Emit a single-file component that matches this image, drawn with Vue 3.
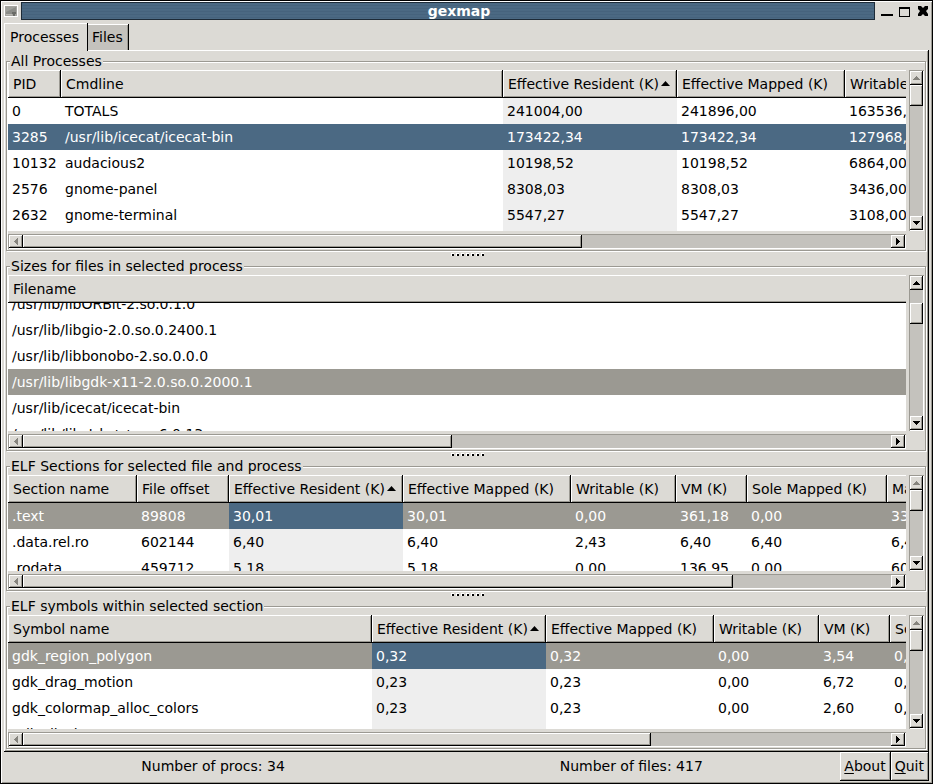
<script setup>
import { onMounted, ref } from 'vue'

const tabs = [
  { label: 'Processes', active: true },
  { label: 'Files', active: false },
]

const panes = [
  {
    id: 'processes',
    title: 'All Processes',
    grow: 133,
    focused: true,
    sorted: 2,
    selected: 1,
    columns: [
      { label: 'PID', width: 53 },
      { label: 'Cmdline', width: 442 },
      { label: 'Effective Resident (K)', width: 174 },
      { label: 'Effective Mapped (K)', width: 168 },
      { label: 'Writable (K)', width: 105 },
    ],
    rows: [
      ['0', 'TOTALS', '241004,00', '241896,00', '163536,00'],
      ['3285', '/usr/lib/icecat/icecat-bin', '173422,34', '173422,34', '127968,00'],
      ['10132', 'audacious2', '10198,52', '10198,52', '6864,00'],
      ['2576', 'gnome-panel', '8308,03', '8308,03', '3436,00'],
      ['2632', 'gnome-terminal', '5547,27', '5547,27', '3108,00'],
    ],
    scrollTop: 0,
    vertical: { before: 0, atStart: true },
    horizontal: 64.4,
  },
  {
    id: 'files',
    title: 'Sizes for files in selected process',
    grow: 128,
    focused: false,
    sorted: -1,
    selected: 3,
    columns: [{ label: 'Filename', width: 1800 }],
    rows: [
      ['/usr/lib/libORBit-2.so.0.1.0'],
      ['/usr/lib/libgio-2.0.so.0.2400.1'],
      ['/usr/lib/libbonobo-2.so.0.0.0'],
      ['/usr/lib/libgdk-x11-2.0.so.0.2000.1'],
      ['/usr/lib/icecat/icecat-bin'],
      ['/usr/lib/libstdc++.so.6.0.13'],
    ],
    scrollTop: 12,
    vertical: { before: 13, atStart: false },
    horizontal: 49.4,
  },
  {
    id: 'sections',
    title: 'ELF Sections for selected file and process',
    grow: 68,
    focused: false,
    sorted: 2,
    selected: 0,
    columns: [
      { label: 'Section name', width: 129 },
      { label: 'File offset', width: 92 },
      { label: 'Effective Resident (K)', width: 174 },
      { label: 'Effective Mapped (K)', width: 168 },
      { label: 'Writable (K)', width: 105 },
      { label: 'VM (K)', width: 71 },
      { label: 'Sole Mapped (K)', width: 140 },
      { label: 'Mapped (K)', width: 105 },
    ],
    rows: [
      ['.text', '89808', '30,01', '30,01', '0,00', '361,18', '0,00', '332,00'],
      ['.data.rel.ro', '602144', '6,40', '6,40', '2,43', '6,40', '6,40', '6,40'],
      ['.rodata', '459712', '5,18', '5,18', '0,00', '136,95', '0,00', '60,00'],
    ],
    scrollTop: 0,
    vertical: { before: 0, atStart: true },
    horizontal: 81.8,
  },
  {
    id: 'symbols',
    title: 'ELF symbols within selected section',
    grow: 86,
    focused: false,
    sorted: 1,
    selected: 0,
    columns: [
      { label: 'Symbol name', width: 364 },
      { label: 'Effective Resident (K)', width: 174 },
      { label: 'Effective Mapped (K)', width: 168 },
      { label: 'Writable (K)', width: 105 },
      { label: 'VM (K)', width: 71 },
      { label: 'Sole Mapped (K)', width: 140 },
    ],
    rows: [
      ['gdk_region_polygon', '0,32', '0,32', '0,00', '3,54', '0,00'],
      ['gdk_drag_motion', '0,23', '0,23', '0,00', '6,72', '0,00'],
      ['gdk_colormap_alloc_colors', '0,23', '0,23', '0,00', '2,60', '0,00'],
      ['gdk_display', '', '', '', '', ''],
    ],
    scrollTop: 0,
    vertical: { before: 0, atStart: true },
    horizontal: 72.4,
  },
]

const views = ref([])
onMounted(() => {
  panes.forEach((pane, i) => {
    views.value[i].scrollTop = pane.scrollTop
  })
})
</script>

<template>
  <div class="window">
    <header class="titlebar">
      <svg class="app-icon" viewBox="0 0 14 12" aria-hidden="true">
        <path fill="#fff" d="M0 0h14v12H0z" />
        <path fill="#a5a49f" d="M1 1h12v10H1z" />
        <path fill="#8a8b87" d="M2 2h10v7H2z" />
        <path fill="#9fa09b" d="M2 2h10L2 7z" />
        <path fill="#b9b8b3" d="M2 9h6v1H2z" />
        <path fill="#6a6b67" d="M8 7h4v2h-1v2H9V9H8z" />
      </svg>
      <h1 class="title">gexmap</h1>
      <div class="window-buttons">
        <button type="button" aria-label="Minimize">
          <svg viewBox="0 0 12 12"><path d="M0 9h12v2H0z" /></svg>
        </button>
        <button type="button" aria-label="Maximize">
          <svg viewBox="0 0 12 12"><path fill-rule="evenodd" d="M0 2h11v10H0zM1 4v7h9V4z" /></svg>
        </button>
        <button type="button" aria-label="Close">
          <svg viewBox="0 0 12 12"><path d="M1 1h3l2 2 2-2h3v3L9 6l2 3v2H8L6 9l-2 2H1V9l2-3-2-2z" /></svg>
        </button>
      </div>
    </header>

    <nav class="tabs" role="tablist">
      <button
        v-for="tab in tabs"
        :key="tab.label"
        type="button"
        role="tab"
        class="tab"
        :class="{ active: tab.active }"
        :aria-selected="tab.active"
      >{{ tab.label }}</button>
    </nav>

    <main class="page">
      <template v-for="(pane, i) in panes" :key="pane.id">
        <div v-if="i" class="handle" role="separator">
          <span v-for="n in 7" :key="n" class="dot"></span>
        </div>
        <section class="pane" :style="{ flexGrow: pane.grow }" :aria-labelledby="pane.id">
          <div class="legend">
            <h2 :id="pane.id">{{ pane.title }}</h2>
          </div>
          <div class="frame">
            <div ref="views" class="view">
              <table :class="{ focused: pane.focused }">
                <colgroup>
                  <col v-for="c in pane.columns" :key="c.label" :style="{ width: c.width + 'px' }" />
                </colgroup>
                <thead>
                  <tr>
                    <th v-for="(c, ci) in pane.columns" :key="c.label" scope="col">
                      <span>{{ c.label }}</span>
                      <svg v-if="ci === pane.sorted" class="sort" viewBox="0 0 9 5" aria-hidden="true">
                        <path d="M0 5h9L4.500 0z" />
                      </svg>
                    </th>
                  </tr>
                </thead>
                <tbody>
                  <tr v-for="(row, ri) in pane.rows" :key="ri" :class="{ selected: ri === pane.selected }">
                    <td v-for="(cell, ci) in row" :key="ci" :class="{ sorted: ci === pane.sorted }">{{ cell }}</td>
                  </tr>
                  <tr class="filler" aria-hidden="true">
                    <td v-for="(c, ci) in pane.columns" :key="ci" :class="{ sorted: ci === pane.sorted }"></td>
                  </tr>
                </tbody>
              </table>
            </div>
            <div class="scroll vertical">
              <button type="button" class="arrow" aria-label="Scroll up" :disabled="pane.vertical.atStart">
                <svg viewBox="0 0 7 4"><path d="M3 0h1v1h1v1h1v1h1v1H0V3h1V2h1V1h1z" /></svg>
              </button>
              <div class="track">
                <div class="thumb" :style="{ marginTop: pane.vertical.before + 'px' }"></div>
              </div>
              <button type="button" class="arrow" aria-label="Scroll down">
                <svg viewBox="0 0 7 4"><path d="M0 0h7v1H6v1H5v1H4v1H3V3H2V2H1V1H0z" /></svg>
              </button>
            </div>
            <div class="scroll horizontal">
              <button type="button" class="arrow side" aria-label="Scroll left" disabled>
                <svg viewBox="0 0 4 7"><path d="M4 0v7H3V6H2V5H1V4H0V3h1V2h1V1h1V0z" /></svg>
              </button>
              <div class="track">
                <div class="thumb" :style="{ width: pane.horizontal + '%' }"></div>
              </div>
              <button type="button" class="arrow side" aria-label="Scroll right">
                <svg viewBox="0 0 4 7"><path d="M0 0v7h1V6h1V5h1V4h1V3H3V2H2V1H1V0z" /></svg>
              </button>
            </div>
          </div>
        </section>
      </template>
    </main>

    <footer class="status">
      <p>Number of procs: 34</p>
      <p>Number of files: 417</p>
      <button type="button" class="action"><u>A</u>bout</button>
      <button type="button" class="action"><u>Q</u>uit</button>
    </footer>
  </div>
</template>

<style>
body {
  background: #dcdad5;
}
</style>

<style scoped>
.window {
  --bg: #dcdad5;
  --trough: #c4c2bd;
  --shade: #9b9992;
  --blue: #4b6983;
  box-sizing: border-box;
  display: flex;
  flex-direction: column;
  height: 100vh;
  min-height: 600px;
  padding: 1px 3px 2px;
  border: 1px solid #000;
  background: var(--bg);
  box-shadow: inset 1px 1px #fff, inset -1px -1px var(--shade);
  color: #000;
  font: 14px/17px "DejaVu Sans", sans-serif;
}

button {
  padding: 0;
  border: 0;
  background: var(--bg);
  color: inherit;
  font: inherit;
}

svg {
  display: block;
}

h1,
h2,
p {
  margin: 0;
  font: inherit;
}

.titlebar {
  display: flex;
  align-items: center;
  height: 18px;
}

.app-icon {
  width: 14px;
  height: 12px;
  margin-right: 3px;
}

.title {
  box-sizing: border-box;
  flex: 1;
  height: 18px;
  padding-left: 22px;
  border: 1px solid #1d2b38;
  background: repeating-linear-gradient(#4b6983 0 2px, #46637d 2px 3px);
  color: #fff;
  font-weight: bold;
  line-height: 17px;
  text-align: center;
}

.window-buttons {
  display: flex;
  gap: 6px;
  padding-left: 6px;
}

.window-buttons svg {
  width: 12px;
  height: 12px;
}

.tabs {
  z-index: 1;
  display: flex;
  align-items: flex-end;
  box-sizing: border-box;
  height: 30px;
}

.tab {
  height: 26px;
  padding: 1px 6px 0 4px;
  background: var(--trough);
  box-shadow: inset -1px 0 #000, inset 0 1px #fff, inset -2px 0 var(--shade);
}

.tab.active {
  height: 28px;
  margin-bottom: -1px;
  padding: 0 9px 0 6px;
  background: var(--bg);
  box-shadow: inset -1px 0 #000, inset 1px 1px #fff;
}

.page {
  display: flex;
  flex: 1;
  flex-direction: column;
  min-height: 0;
  padding: 3px 2px 2px;
  box-shadow: inset -1px -1px #000, inset 1px 1px #fff, inset -2px -2px var(--shade);
}

.handle {
  display: flex;
  gap: 2px;
  align-items: flex-start;
  justify-content: center;
  box-sizing: border-box;
  height: 6px;
  padding-top: 1px;
  padding-left: 2px;
}

.dot {
  width: 3px;
  height: 3px;
  background: linear-gradient(#000, #000) 1px 1px / 2px 2px no-repeat #fff;
}

.pane {
  display: flex;
  flex: 1 1 66px;
  flex-direction: column;
  min-height: 0;
}

.legend {
  position: relative;
  z-index: 1;
  height: 8px;
  padding-left: 4px;
}

.legend h2 {
  width: max-content;
  padding: 0 1px;
  background: var(--bg);
}

.frame {
  display: grid;
  flex: 1;
  grid-template-rows: minmax(0, 1fr) 15px;
  grid-template-columns: minmax(0, 1fr) 15px;
  gap: 3px;
  min-height: 0;
  margin: 0 1px 1px 0;
  padding: 8px 1px 1px;
  border: 1px solid var(--shade);
  box-shadow: inset 1px 1px #fff, 1px 1px #fff;
}

.view {
  overflow: auto;
  background: #fff;
  scrollbar-width: none;
}

table {
  width: max-content;
  min-width: 100%;
  height: 100%;
  border-spacing: 0;
  table-layout: fixed;
}

th,
td {
  box-sizing: border-box;
  padding: 0 4px;
  overflow: hidden;
  text-align: left;
  white-space: nowrap;
}

th {
  position: sticky;
  top: 0;
  height: 28px;
  padding: 0 5px;
  background: var(--bg);
  box-shadow: inset -1px -1px #000, inset 1px 1px #fff, inset -2px -2px var(--shade);
  font-weight: inherit;
}

.sort {
  display: inline-block;
  width: 9px;
  height: 5px;
  margin-left: 2px;
  vertical-align: 3px;
}

td {
  height: 26px;
}

.filler td {
  height: auto;
  padding: 0;
}

td.sorted {
  background: #eee;
}

.selected td {
  background: var(--shade);
  color: #fff;
}

.selected td.sorted,
.focused .selected td {
  background: var(--blue);
}

.scroll {
  display: flex;
  box-sizing: border-box;
  padding: 1px;
  background: var(--trough);
  box-shadow: inset 1px 1px var(--shade), inset -1px -1px #fff;
}

.vertical {
  flex-direction: column;
}

.track {
  display: flow-root;
  flex: 1;
  min-height: 0;
}

.arrow,
.thumb {
  background: var(--bg);
  box-shadow: inset -1px -1px #000, inset 1px 1px #fff, inset -2px -2px var(--shade);
}

.vertical .thumb {
  height: 21px;
}

.horizontal .thumb {
  height: 100%;
}

.arrow {
  display: flex;
  align-items: center;
  justify-content: center;
  width: 100%;
  height: 14px;
}

.arrow.side {
  width: 14px;
  height: 100%;
}

.arrow svg {
  width: 7px;
  height: 4px;
}

.arrow.side svg {
  width: 4px;
  height: 7px;
}

.arrow:disabled {
  fill: #85837d;
}

.status {
  display: flex;
  align-items: stretch;
  height: 29px;
}

.status p {
  flex: 1;
  line-height: 28px;
  text-align: center;
}

.action {
  padding: 0 5px 0 4px;
  box-shadow: inset -1px -1px #000, inset 1px 1px #fff, inset -2px -2px var(--shade);
}

.action u {
  text-underline-offset: 2px;
}
</style>
